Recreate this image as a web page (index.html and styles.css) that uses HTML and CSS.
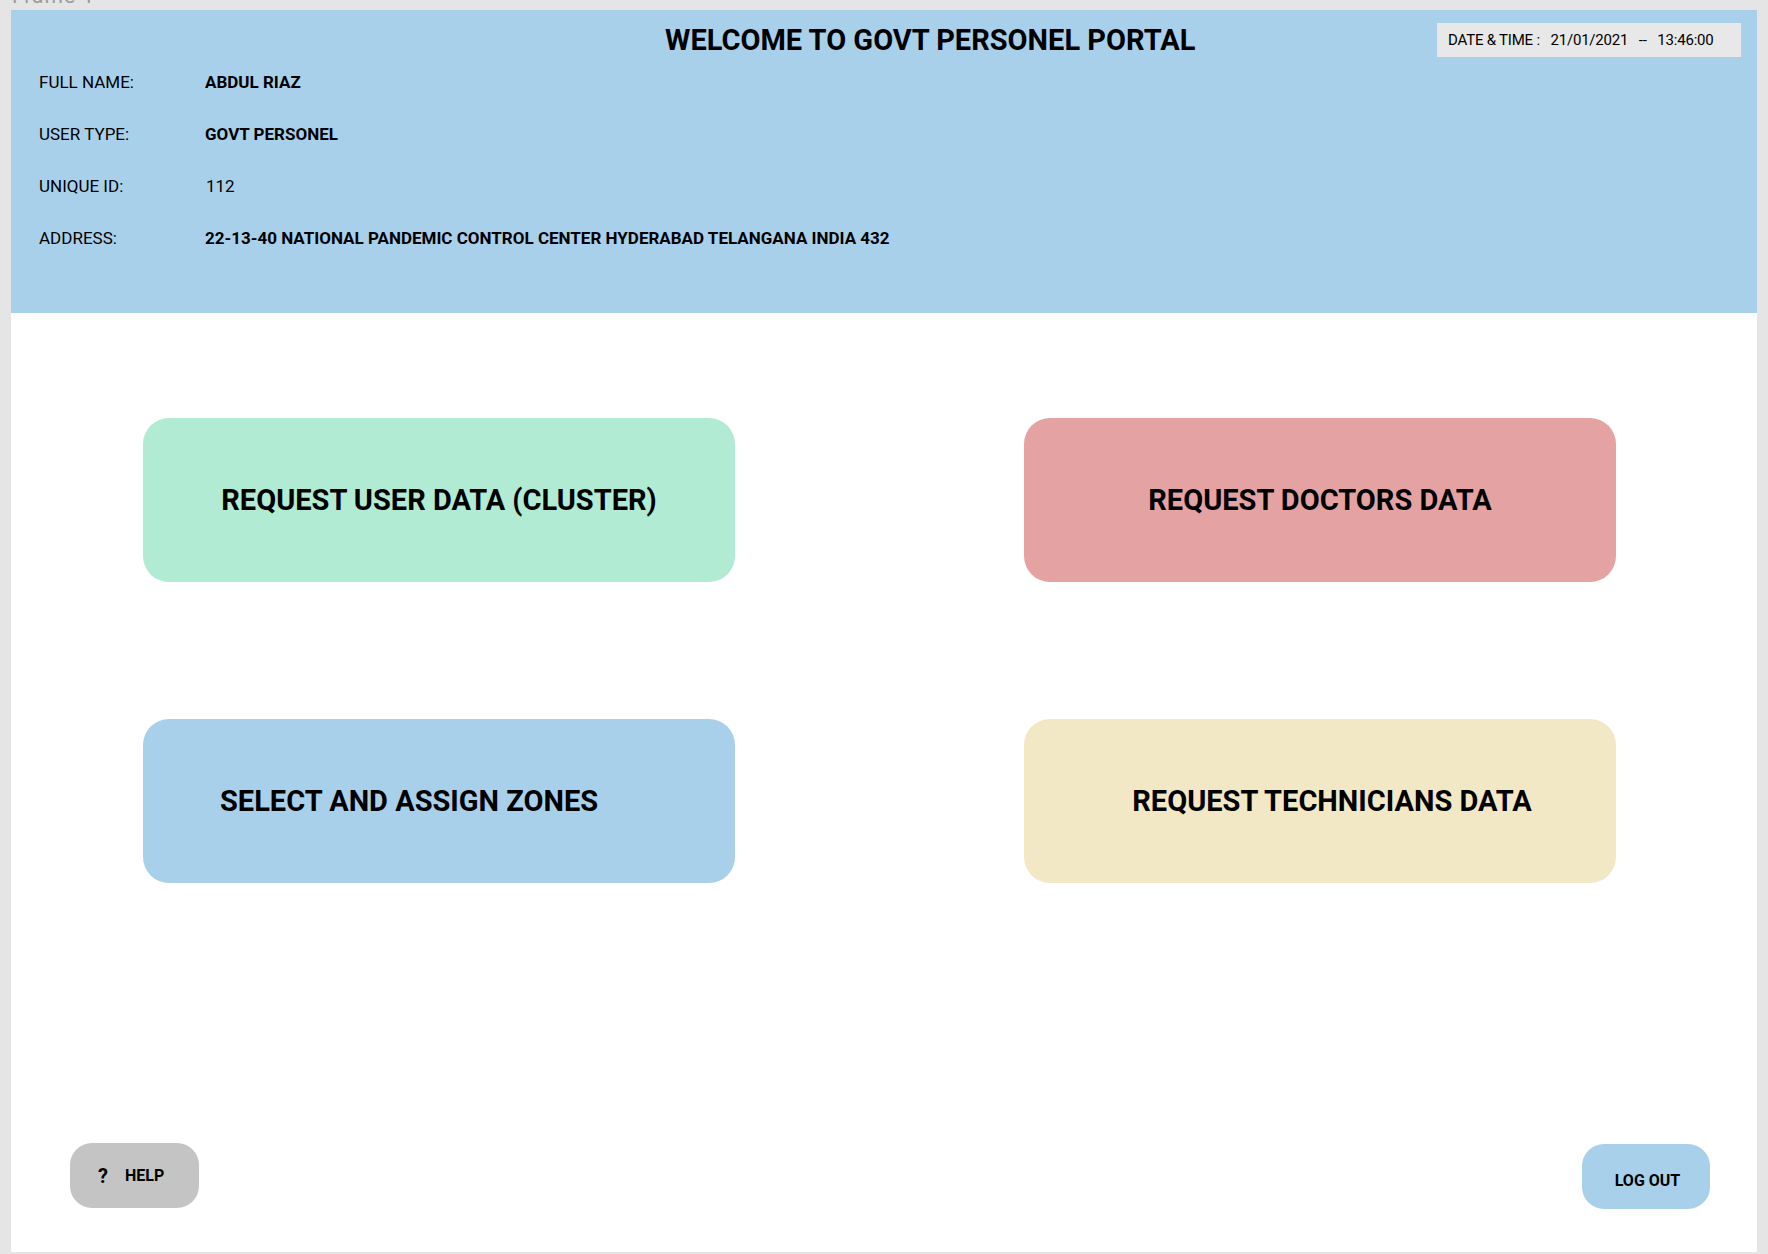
FILE: index.html
```html
<!DOCTYPE html>
<html lang="en">
<head>
<meta charset="utf-8">
<title>Govt Personel Portal</title>
<link rel="stylesheet" href="styles.css">
</head>
<body>
<div class="frame-label"><span>Frame 1</span></div>
<div class="frame">
  <header class="header">
    <div class="top-row">
      <h1 class="title">WELCOME TO GOVT PERSONEL PORTAL</h1>
      <div class="datetime">DATE &amp; TIME :   21/01/2021   --   13:46:00</div>
    </div>
    <dl class="info">
      <div class="info-row"><dt>FULL NAME:</dt><dd class="strong">ABDUL RIAZ</dd></div>
      <div class="info-row"><dt>USER TYPE:</dt><dd class="strong">GOVT PERSONEL</dd></div>
      <div class="info-row"><dt>UNIQUE ID:</dt><dd class="id">112</dd></div>
      <div class="info-row"><dt>ADDRESS:</dt><dd class="strong">22-13-40 NATIONAL PANDEMIC CONTROL CENTER HYDERABAD TELANGANA INDIA 432</dd></div>
    </dl>
  </header>
  <main class="main">
    <div class="actions">
      <button class="action green">REQUEST USER DATA (CLUSTER)</button>
      <button class="action red">REQUEST DOCTORS DATA</button>
      <button class="action blue left">SELECT AND ASSIGN ZONES</button>
      <button class="action yellow shifted">REQUEST TECHNICIANS DATA</button>
    </div>
  </main>
  <footer class="footer">
    <button class="help"><span class="q">?</span><span>HELP</span></button>
    <button class="logout">LOG OUT</button>
  </footer>
</div>
</body>
</html>
```

FILE: styles.css
```css
* { box-sizing: border-box; }

html, body {
  margin: 0;
  padding: 0;
}

body {
  background: #e5e5e5;
  font-family: Roboto, "Liberation Sans", Arial, sans-serif;
  color: #000;
  width: 1768px;
  height: 1254px;
  overflow: hidden;
}

.frame-label {
  height: 10px;
  overflow: hidden;
  padding-left: 12px;
}

.frame-label span {
  display: block;
  margin-top: -17px;
  font-size: 21px;
  line-height: 26px;
  color: #9a9a9a;
  letter-spacing: 1px;
}

.frame {
  margin-left: 11px;
  width: 1746px;
  height: 1242px;
  background: #ffffff;
  display: flex;
  flex-direction: column;
}

.header {
  height: 303px;
  background: #a9d0eb;
  padding: 13px 16px 0 16px;
}

.top-row {
  display: flex;
  align-items: flex-start;
}

.title {
  margin: 0 0 0 638px;
  font-size: 29px;
  line-height: 34px;
  font-weight: 700;
  letter-spacing: 0;
}

.datetime {
  margin-left: auto;
  width: 304px;
  height: 34px;
  background: #e8e8e8;
  font-size: 15px;
  line-height: 34px;
  padding-left: 11px;
  letter-spacing: -0.2px;
  white-space: pre;
}

.info {
  margin: 15px 0 0 12px;
  display: flex;
  flex-direction: column;
  gap: 32px;
}

.info-row {
  display: flex;
  font-size: 17px;
  line-height: 20px;
}

.info-row dt {
  width: 166px;
  font-weight: 400;
}

.info-row dd {
  margin: 0;
}

.info-row .strong {
  font-weight: 700;
}

.info-row .id {
  padding-left: 1px;
}

.main {
  flex: 1;
  padding: 105px 0 0 132px;
}

.actions {
  display: grid;
  grid-template-columns: 592px 592px;
  grid-template-rows: 164px 164px;
  column-gap: 289px;
  row-gap: 137px;
}

.action {
  border: none;
  border-radius: 26px;
  font-family: inherit;
  font-size: 29px;
  font-weight: 700;
  color: #000;
  display: flex;
  align-items: center;
  justify-content: center;
  padding: 0;
  cursor: pointer;
}

.action.left {
  justify-content: flex-start;
  padding-left: 77px;
}

.action.shifted {
  padding-left: 24px;
}

.green { background: #b2ebd4; }
.red { background: #e4a3a2; }
.blue { background: #a9d0eb; }
.yellow { background: #f2e8c6; }

.footer {
  display: flex;
  justify-content: space-between;
  align-items: flex-end;
  padding: 0 47px 43px 59px;
}

.help {
  width: 129px;
  height: 65px;
  border: none;
  border-radius: 22px;
  background: #c4c4c4;
  font-family: inherit;
  font-weight: 700;
  font-size: 16px;
  color: #000;
  display: flex;
  align-items: center;
  padding: 0 0 0 28px;
  gap: 17px;
  margin-bottom: 1px;
}

.help .q {
  font-size: 20px;
}

.logout {
  width: 128px;
  height: 65px;
  border: none;
  border-radius: 22px;
  background: #a9d0eb;
  font-family: inherit;
  font-weight: 700;
  font-size: 16px;
  color: #000;
  padding: 7px 0 0 3px;
}
```
